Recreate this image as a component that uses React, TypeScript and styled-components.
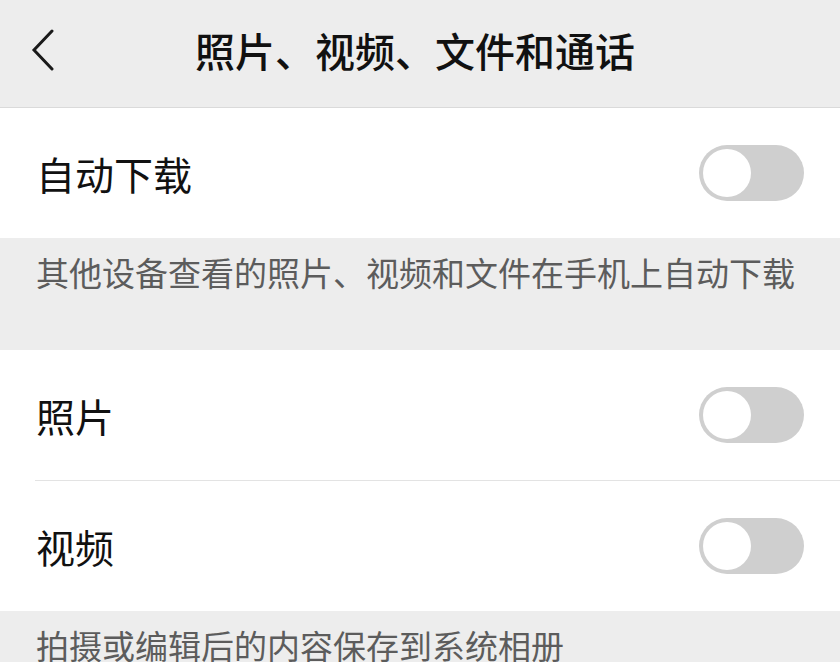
import React from 'react';
import styled, {createGlobalStyle} from 'styled-components';

const GlobalStyle = createGlobalStyle`
  html, body {
    margin: 0;
    padding: 0;
    background: #ededed;
  }
  body {
    font-family: "Noto Sans CJK SC", "Noto Sans", sans-serif;
  }
`;

const Page = styled.div`
  width: 840px;
  height: 662px;
  overflow: hidden;
  background: #ededed;
  display: flex;
  flex-direction: column;
`;

const Header = styled.div`
  height: 108px;
  flex: none;
  display: flex;
  align-items: center;
  position: relative;
  border-bottom: 1px solid #dadada;
  box-sizing: border-box;
  padding-bottom: 8px;
`;

const BackButton = styled.div`
  width: 90px;
  display: flex;
  align-items: center;
  padding-left: 31px;
  box-sizing: border-box;
`;

const Title = styled.div`
  position: absolute;
  left: 0;
  right: 10px;
  top: 0;
  bottom: 8px;
  display: flex;
  align-items: center;
  justify-content: center;
  font-size: 40px;
  font-weight: 500;
  color: #111;
  pointer-events: none;
`;

const Group = styled.div`
  background: #fff;
  display: flex;
  flex-direction: column;
`;

const Row = styled.div<{$divider?: boolean}>`
  height: ${p => (p.$divider ? 131 : 130)}px;
  box-sizing: border-box;
  display: flex;
  align-items: center;
  justify-content: space-between;
  margin-left: 35px;
  padding-right: 36px;
  border-bottom: ${p => (p.$divider ? '1px solid #e3e3e3' : 'none')};
`;

const Label = styled.div`
  font-size: 39px;
  color: #111;
  margin-left: 1px;
`;

const Note = styled.div<{$height: number}>`
  height: ${p => p.$height}px;
  box-sizing: border-box;
  padding: 11px 0 0 36px;
  font-size: 33px;
  line-height: 46px;
  color: #5c5c5c;
  white-space: nowrap;
`;

const Track = styled.div`
  width: 105px;
  height: 56px;
  border-radius: 28px;
  background: #cfcfcf;
  padding: 4px;
  box-sizing: border-box;
  display: flex;
  align-items: center;
`;

const Knob = styled.div`
  width: 48px;
  height: 48px;
  border-radius: 50%;
  background: #fff;
`;

function Toggle() {
  return (
    <Track>
      <Knob />
    </Track>
  );
}

function Chevron() {
  return (
    <svg width="24" height="42" viewBox="0 0 24 42">
      <polyline
        points="21,2 3,21 21,40"
        fill="none"
        stroke="#1a1a1a"
        strokeWidth="3"
        strokeLinecap="round"
        strokeLinejoin="miter"
      />
    </svg>
  );
}

export default function App() {
  return (
    <Page>
      <GlobalStyle />
      <Header>
        <BackButton>
          <Chevron />
        </BackButton>
        <Title>照片、视频、文件和通话</Title>
      </Header>
      <Group>
        <Row>
          <Label>自动下载</Label>
          <Toggle />
        </Row>
      </Group>
      <Note $height={112}>其他设备查看的照片、视频和文件在手机上自动下载</Note>
      <Group>
        <Row $divider>
          <Label>照片</Label>
          <Toggle />
        </Row>
        <Row>
          <Label>视频</Label>
          <Toggle />
        </Row>
      </Group>
      <Note $height={50}>拍摄或编辑后的内容保存到系统相册</Note>
    </Page>
  );
}
